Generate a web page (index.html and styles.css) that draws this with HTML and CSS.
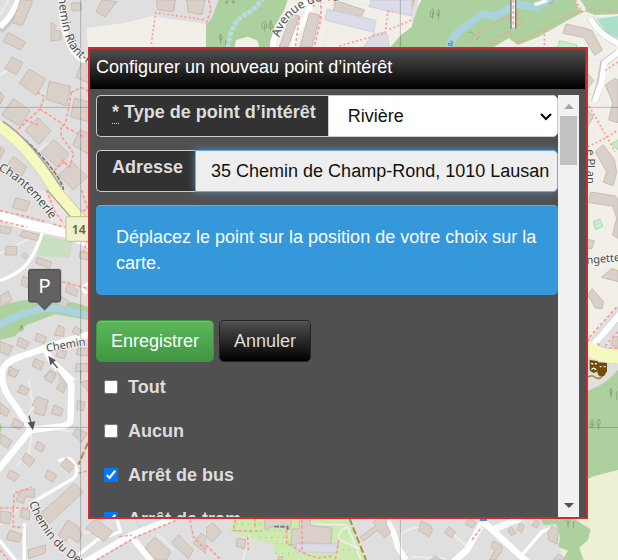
FILE: index.html
```html
<!DOCTYPE html>
<html lang="fr">
<head>
<meta charset="utf-8">
<meta name="viewport" content="width=device-width, initial-scale=1">
<title>Configurer un nouveau point d’intérêt</title>
<link rel="stylesheet" href="styles.css">
</head>
<body>
<svg class="map" viewBox="0 0 618 560" preserveAspectRatio="xMidYMid slice" aria-hidden="true">
  <rect class="residential" width="618" height="560"/>

  <!-- north-west -->
  <svg x="0" y="0" width="206" height="190" viewBox="0 0 618 570">
    <path class="land" d="M260 84 370 70 455 49 618 72V160H265Z"/>
    <path class="lane" d="M0 45 25 0M0 225 30 205M100 465 140 430"/>
    <path class="casing" d="M0 92Q45 50 62 0"/>
    <path class="road r18" d="M0 82Q38 45 55 0"/>
    <path class="road r18" d="M184 0Q183 70 205 125T275 190"/>
    <path class="building" d="M62 0 36 68 67 77 97 8 95 0ZM25 97 9 124 62 150 77 126ZM35 171 68 188 49 224 15 206ZM87 207 136 237 110 286 57 250ZM148 244 212 259 199 317 138 298ZM40 296 90 332 61 380 5 345ZM115 353 153 392 117 433 75 391ZM162 418 207 462 172 502 125 458ZM217 487 262 530 220 570 175 525ZM41 470 80 500 64 530 22 495ZM0 275 12 290 0 313ZM0 440 14 450 0 478ZM214 10 242 8 245 30 216 33ZM154 68 169 77 162 90 182 94 184 119 153 123 153 87ZM306 0 350 5 315 51 288 35ZM470 0H526L521 35 472 29ZM560 0H615L606 44 565 36ZM244 190 280 190V255L228 232ZM224 294 280 310V370L212 350ZM240 390 280 405V470L218 435Z"/>
    <path class="path" d="M111 276 133 290 120 327 42 400M120 327 183 369 191 378 250 410M214 277 197 370 183 382 184 409 222 462 208 501 186 479M150 522 200 480M213 277 245 263 270 276M75 360 115 375M40 402 72 430"/>
    <path class="path dots" d="M454 132 467 38 618 60"/>
    <path class="rail" d="M0 370Q70 405 130 475T190 570"/>
    <path class="major-casing" d="M0 378Q75 425 170 570"/>
    <path class="major" d="M-10 375Q75 425 170 575"/>
    <path class="grid" d="M242 0V570M0 322H618"/>
    <path id="riant" class="guide" d="M174 -32Q178 58 198 116T290 204"/>
    <text class="street large"><textPath href="#riant">Chemin Riant-Pré</textPath></text>
  </svg>

  <!-- west -->
  <svg x="0" y="190" width="206" height="190" viewBox="0 0 618 570">
    <path class="pink" d="M95 0H200L240 85 180 115 140 65Z"/>
    <path class="forest" d="M0 345 75 330 110 335 220 337 265 350V390L165 373 80 405 42 440 0 450Z"/>
    <path class="orchard" d="M128 136 219 156 209 204 112 197Z"/>
    <path class="river" d="M-10 410Q50 375 100 363Q155 340 270 380"/>
    <path class="lane" d="M80 0 140 40 157 95M0 190 90 145M0 540 120 475M78 230 120 290"/>
    <path class="road r27" d="M-10 72 65 100 198 128 280 165"/>
    <path class="road r12" d="M126 130Q100 205 73 230T0 272M270 280Q235 290 260 310"/>
    <path class="road r24" d="M8 580Q-8 520 60 500L135 475 190 455 280 430M135 475 155 515 220 575"/>
    <path class="building" d="M48 23 90 36 78 63 37 53ZM0 107 35 114 28 132 0 128ZM68 121 118 134 111 152 60 139ZM17 169H50V195H15ZM74 187 85 198 75 208 64 196ZM112 201 155 217 148 235 106 218ZM69 258 90 268 82 293 64 284ZM25 303 36 331 0 350V318ZM205 275 222 293 235 301 228 320 195 304ZM175 315 206 333 195 355 170 340ZM0 454 39 469 25 498 0 486ZM57 442 89 457 76 477 50 466ZM111 429 140 442 132 461 104 451ZM176 405 193 413 191 439 163 436ZM226 409 247 422 236 437 216 427ZM104 506 132 516 123 541 96 528ZM29 529 56 543 46 562 23 554ZM151 540 169 549 158 570 133 559ZM232 475H265V498L229 494ZM229 521H265V545H225ZM173 480 200 484 194 506 168 499ZM240 185 265 188V210L237 203Z"/>
    <path class="path" d="M0 62 80 80 140 96M160 102 195 113M139 0 165 65 190 100M245 0 262 55 210 90M0 92 80 112M187 275 264 296M262 150 250 190"/>
    <path class="major-casing" d="M155 -10 250 100"/>
    <path class="major" d="M155 -12 252 100"/>
    <path class="grid" d="M242 0V570"/>
    <rect class="shield" x="198" y="80" width="90" height="74" rx="5"/>
    <text class="ref" x="215" y="132">14</text>
    <text class="street" transform="translate(140 486) rotate(-10)">Chemin</text>
    <path class="arrow" d="M173 534 152 510M148 502l4 20 12-11Z"/>
    <path class="symbol" d="M58 422 64 405 72 420M65 407V426"/>
    <path class="pin-shadow" d="M89 236H178Q184 236 184 242V330Q184 338 177 338H158L134 363 109 338H91Q84 338 84 330V242Q84 236 89 236Z"/>
    <path class="pin" d="M92 239H175Q181 239 181 245V328Q181 335 175 335H155L134 358 112 335H92Q86 335 86 328V245Q86 239 92 239Z"/>
    <text class="pin-text" x="115" y="310">P</text>
  </svg>
  <svg x="0" y="150" width="90" height="90" viewBox="0 0 270 270">
    <path id="chantemerle" class="guide" d="M-6 60Q75 100 150 206"/>
    <text class="street large"><textPath href="#chantemerle">Chantemerle</textPath></text>
  </svg>

  <!-- south-west -->
  <svg x="0" y="370" width="206" height="190" viewBox="0 0 618 570">
    <path class="forest" d="M0 158 5 165V182L0 185Z"/>
    <path class="industry" d="M405 445H490L420 475Z"/>
    <path class="lane" d="M60 175 100 110 85 30M95 192 85 255 50 285M180 180 260 190M110 390 140 365M0 465 35 430 65 410M250 490 300 480 310 510M470 490 520 540"/>
    <path class="road r24" d="M8 -10Q0 45 30 85T92 180L-10 305M92 180 180 170Q213 165 212 145L214 45Q210 25 165 -10"/>
    <path class="road r12" d="M175 273Q210 255 222 280 240 305 220 325L102 395 80 435M73 460V575M-10 500 50 575M350 445 362 485 290 510 235 555"/>
    <path class="road r24" d="M250 580 390 497 530 440M395 500 460 580"/>
    <path class="building" d="M34 0H58L45 22 25 13ZM148 3 168 15 155 40 134 27ZM63 44 90 58 77 75 52 66ZM112 80 145 92 133 137 103 130 108 113 96 105ZM163 105 190 118 181 139 153 130ZM0 98 29 121 20 140 0 130ZM43 145 72 160 60 179 34 168ZM0 190 36 212 23 235 0 220ZM113 213 135 228 125 247 104 234ZM77 248 105 269 90 291 65 270ZM198 263 224 287 208 308 183 287ZM31 299 58 316 43 335 20 320ZM143 299 170 315 158 337 135 322ZM223 340 250 366 149 460 122 430ZM60 362 105 357 102 383 76 380 70 400 48 392ZM65 415 90 420 87 450 61 441ZM0 423 35 428 28 462 0 457ZM29 481 66 493 58 517 18 508ZM203 450 235 470 245 495 235 520 205 498 198 515 175 495ZM84 540 137 524 136 548 87 566ZM240 35 265 32V65ZM232 92 255 96 250 123 230 118ZM230 175 262 190 245 217 217 192ZM275 455 290 449 338 485 313 515 258 475ZM464 502 512 545 500 570H465L435 533ZM536 495 580 540 565 566 515 518ZM603 490 618 500V550L580 520ZM170 0 200 45 190 68 168 55 180 40"/>
    <path class="path" d="M0 414H85M40 415 43 370 95 351M40 418 40 470 70 473M235 310 264 302M570 450 580 500 618 540M0 540 25 570"/>
    <path class="path" d="M290 570 410 500 535 448M358 500 395 495"/>
    <path class="track" d="M264 218 235 284"/>
    <path class="grid" d="M242 0V570M0 172H618"/>
    <path class="arrow" d="M87 137 96 168M86 159 98 176 103 156Z"/>
    <path id="devin" class="guide" d="M87 398Q105 455 151 510T260 595"/>
    <text class="street large"><textPath href="#devin">Chemin du Dev</textPath></text>
  </svg>

  <!-- north -->
  <svg x="206" y="0" width="206" height="141" viewBox="0 0 618 423">
    <path class="land" d="M0 0H618V423H0Z"/>
    <path class="forest" d="M37 0H245L235 30 205 80 195 145H160L155 122 125 110 90 120 85 145H0V75Q25 40 37 0ZM618 80 585 105 550 145H618Z"/>
    <path class="residential" d="M0 0H36L20 50 0 75Z"/>
    <path class="water-line" d="M170 -10Q155 25 115 45T65 145"/>
    <path class="road r18" d="M315 0Q270 20 235 60T200 145M320 5 300 55 268 100 265 145"/>
    <path class="lane" d="M255 70 230 145M315 0 328 40M380 0 520 20 618 38M380 30 350 140M400 145 505 110"/>
    <path class="building" d="M390 2 475 30 463 57 382 31ZM310 38 342 46 318 141H282ZM255 43 280 48 265 90 245 141H220Z"/>
    <path class="industry" d="M363 27 511 61 503 97 357 60ZM495 0H618V48L489 20ZM500 103 530 97 545 106 550 145H470Z"/>
    <path class="path" d="M8 0 15 30 0 70M315 0 325 20M345 0 345 55 325 141M280 50 268 141M390 0 380 15"/>
    <path class="path dots" d="M400 138 480 115 538 100 545 35 560 35M550 88 618 60"/>
    <path class="grid" d="M583 0V141"/>
    <path class="symbol" d="M62 0V12M82 0V12M56 4Q62 16 68 2M77 3Q82 12 88 2M176 64Q164 70 168 82 173 90 181 82 185 72 176 64ZM176 72V94M194 60 187 84H201ZM194 70V94M44 101Q35 111 44 121 53 113 44 101ZM44 110V131M59 120V136"/>
    <path id="avenue" class="guide" d="M220 113Q236 55 290 24T400 4"/>
    <text class="street large"><textPath href="#avenue">Avenue de Val</textPath></text>
  </svg>

  <!-- north-east -->
  <svg x="412" y="0" width="206" height="190" viewBox="0 0 618 570">
    <path class="land" d="M0 0H618V570H0Z"/>
    <path class="forest" d="M28 0H490L500 28 550 45 618 42V0H505L525 30 465 62 380 110 318 135 290 115 230 150H-10V80Z"/>
    <path class="residential" d="M0 0H20L12 40 0 75Z"/>
    <path class="river" d="M110 150Q115 110 160 80L210 42 245 50 290 25 320 12 370 22 430 -10"/>
    <path class="pitch" d="M553 56 618 48V115L585 100Z"/>
    <path class="green-box" d="M442 122 495 135 490 150H435ZM600 430 618 420V450Z"/>
    <path class="lane" d="M520 175 618 195M525 400 555 385M550 400 525 410M560 180 618 150"/>
    <path class="road-casing" d="M535 55Q560 100 618 130M618 157 575 190 565 250 548 305"/>
    <path class="road r18" d="M535 55Q560 105 625 133M625 152 578 188 568 250 548 305"/>
    <path class="building" d="M462 72 525 86 540 92 571 150 548 166 515 112 453 100ZM527 220 545 242 527 265ZM608 235 618 240V368L590 360 602 308 580 255ZM527 330 545 350 527 378ZM573 434 607 478 614 517 603 557 574 547 584 515 550 455ZM0 0H8L0 25Z"/>
    <path class="path dots" d="M490 0 510 35 480 40 318 130 292 95 255 110 225 140M165 138Q190 95 265 60L315 40 327 65 310 80M397 90V141M520 28 618 35M531 318 610 455M527 440 570 420 618 390M580 212 618 185"/>
    <path class="bridge" d="M304 -5V86"/><path class="road r12" d="M304 -5V86"/><path class="path" d="M304 0V86"/>
    <path class="road r12" d="M368 14 410 0"/>
    <path class="grid" d="M527 322H618"/>
    <path class="symbol" d="M62 26Q50 38 57 52 70 50 62 26ZM62 35V58M80 28Q70 37 76 48 88 44 80 28ZM80 38V60M170 98Q180 90 186 108M192 120 206 105M405 0 415 12 425 0"/>
    <text class="water-text" transform="translate(105 135) rotate(20)">a</text>
    <text class="street" transform="translate(524 448) rotate(90)">e Pl an</text>
  </svg>

  <!-- east -->
  <svg x="412" y="190" width="206" height="190" viewBox="0 0 618 570">
    <path class="land" d="M500 0H618V350L530 450H500Z"/>
    <path class="forest" d="M618 540 590 570H618Z"/>
    <path class="lane" d="M527 275 618 205M527 20 560 0M575 470 618 430"/>
    <path class="building" d="M536 6 610 18 618 30V145L602 135 614 85 602 48 530 38ZM527 148 547 153 540 176 527 175ZM600 235 618 242V275L568 262ZM540 296 575 335 570 356 550 354 527 315ZM605 438 618 440V475L598 465Z"/>
    <path class="green-box" d="M544 96 563 87 572 108 552 119Z"/>
    <path class="road-casing r30" d="M535 475 630 365"/>
    <path class="road r24" d="M535 475 630 365"/>
    <path class="path" d="M532 442 618 347M555 460 573 475 618 425M527 445 545 475 618 475M570 514 618 520"/>
    <path class="major wide" d="M520 465Q550 500 630 500"/>
    <path class="masks" d="M533 509 558 514V540Q546 558 533 540ZM558 517 585 519V545Q570 562 557 546Z"/>
    <path class="mask-face" d="M537 520 544 522M549 522 555 520M538 539Q546 530 552 540M563 530H569M575 530H581M564 549Q570 540 579 549"/>
    <path class="track thin" d="M527 562Q540 553 550 562T570 562"/>
    <text class="street" transform="translate(524 222) rotate(-5)">ngette</text>
  </svg>

  <!-- south-east -->
  <svg x="412" y="370" width="206" height="190" viewBox="0 0 618 570">
    <path class="forest" d="M527 62Q580 45 618 0V302L545 320 527 328Z"/>
    <path class="farm" d="M527 328 545 319 618 300V570H450L440 447H527Z"/>
    <path class="forest" d="M385 447H487L536 478 528 510 502 533 515 570H450L468 542 438 530 445 505 433 462 395 465Z"/>
    <path class="lane" d="M0 475 35 470M120 490 165 530M285 535 300 520M0 560 100 565"/>
    <path class="road r24" d="M125 575 165 540 213 455 350 580M240 480 325 445"/>
    <path class="road r12" d="M330 555 390 485 427 472"/>
    <path class="building" d="M28 452 58 469 61 482 52 500 20 482ZM112 470 131 486 119 503 98 489ZM172 446 193 458 181 474 160 462ZM245 513 271 528 268 545 250 570H233L249 540 236 530ZM298 470 312 490 298 497 287 480ZM325 460 337 468 328 488 316 478ZM370 449 383 457 375 474 360 467ZM420 468 438 480 435 522 410 510 407 485ZM440 552 458 565V570H424ZM70 558 88 570H55Z"/>
    <path class="path" d="M180 510 210 470"/>
    <path class="blue" d="M203 450H225"/>
    <path class="grid" d="M527 172H618"/>
    <path class="symbol" d="M597 54Q589 65 597 75 606 66 597 54ZM597 60V84M614 63V90M540 148 534 165H546ZM540 158V176M560 147Q550 160 560 168 570 160 560 147ZM560 158V179M460 448 468 460 475 448M468 455V473M485 453V475"/>
    <path class="masks" d="M556 0H583Q582 20 568 20 555 18 556 0Z"/><path class="track thin" d="M527 21Q540 14 548 21T566 21"/>
  </svg>

  <!-- south -->
  <svg x="206" y="518" width="206" height="42" viewBox="0 354 618 126">
    <path class="park" d="M85 354H430L480 480H225L205 460V435L70 395Z"/>
    <path class="park-dots" d="M90 372H175M95 392H240M160 412H240M210 432H250M210 460H265M400 372H430M400 395H440M410 450H470M325 380H390"/>
    <path class="lane" d="M110 480 130 405M300 354 318 373 425 374M425 380Q390 395 400 420L460 445M425 380 465 480M585 400 618 385M585 400V480"/>
    <path class="road r18" d="M530 350Q560 375 575 440L600 480"/>
    <path class="building" d="M20 368 47 397 17 426 0 410V385ZM94 414 120 420 116 446 90 438ZM176 354H257L252 388 207 378 177 390ZM258 387H280V354H313V375L378 385 375 432 280 428 275 440 255 432ZM463 410 510 377 502 366 515 354H545L540 370 554 398 536 413 515 390 472 423ZM218 470H230V480H215Z"/>
    <path class="industry" d="M272 431 398 432 392 458 270 456Z"/>
    <path class="path" d="M88 360 82 392 165 394M147 354V380M125 410 127 450M242 390V430L305 465 335 474 380 468M288 360V455M0 435 45 480M398 420 388 480"/>
    <path class="rail" d="M205 380H245V390"/>
    <path class="track" d="M430 354 480 480"/>
    <path class="grid" d="M583 354V480"/>
  </svg>
</svg>

<main class="stage">
  <section class="dialog" role="dialog" aria-labelledby="dialog-title">
    <h1 class="dialog-title" id="dialog-title">Configurer un nouveau point d’intérêt</h1>
    <div class="dialog-body">
      <form class="form">
        <div class="field">
          <label class="addon" for="type"><abbr class="required" title="Obligatoire">*</abbr> Type de point d’intérêt</label>
          <div class="select-wrap">
            <select class="control select" id="type"><option>Rivière</option></select>
            <svg class="chevron" viewBox="0 0 12 8" aria-hidden="true"><path d="M1 1l5 5 5-5"/></svg>
          </div>
        </div>
        <div class="field">
          <label class="addon" for="address">Adresse</label>
          <input class="control address" id="address" type="text" value="35 Chemin de Champ-Rond, 1010 Lausan">
        </div>
        <p class="notice">Déplacez le point sur la position de votre choix sur la carte.</p>
        <div class="actions">
          <button class="button save" type="button">Enregistrer</button>
          <button class="button cancel" type="button">Annuler</button>
        </div>
        <div class="options">
          <label class="option"><input type="checkbox">Tout</label>
          <label class="option"><input type="checkbox">Aucun</label>
          <label class="option"><input type="checkbox" checked>Arrêt de bus</label>
          <label class="option"><input type="checkbox" checked>Arrêt de tram</label>
        </div>
      </form>
      <div class="scrollbar" aria-hidden="true">
        <span class="scroll-up"></span>
        <span class="scroll-thumb"></span>
        <span class="scroll-down"></span>
      </div>
    </div>
  </section>
</main>
</body>
</html>
```
FILE: styles.css
```css
* { box-sizing: border-box; }

body {
  margin: 0;
  min-height: 100vh;
  overflow: hidden;
  color: #ddd;
  font: 18px/26px "Liberation Sans", Arial, sans-serif;
}

/* Map */
.map { position: fixed; inset: 0; width: 100%; height: 100%; }
.residential { fill: #dfdfdf; }
.land { fill: #f2efe9; }
.pink { fill: #eee5e2; }
.forest { fill: #add19e; }
.orchard { fill: #c8dfc0; }
.park { fill: #cdebb0; }
.park-dots { fill: none; stroke: #8fbd78; stroke-width: 3; stroke-dasharray: 3 15; }
.farm { fill: #eef0d5; }
.pitch { fill: #aae0cb; }
.green-box { fill: #cfeccf; stroke: #9be0a6; stroke-width: 3; }
.industry { fill: #dcdce8; stroke: #c5c5d4; stroke-width: 2; }
.building { fill: #d9d0c9; stroke: #c9bcb2; stroke-width: 3; }
.river { fill: none; stroke: #aad3df; stroke-width: 22; }
.water-line { fill: none; stroke: #b9dce3; stroke-width: 14; stroke-dasharray: 14 4; }
.lane { fill: none; stroke: #ececec; stroke-width: 6; }
.road { fill: none; stroke: #fff; stroke-linejoin: round; }
.r12 { stroke-width: 10; }
.r18 { stroke-width: 17; }
.r24 { stroke-width: 19; }
.r27 { stroke-width: 30; }
.casing, .road-casing { fill: none; stroke: #c9c9c9; stroke-width: 22; }
.major-casing { fill: none; stroke: #a4a88c; stroke-width: 37; }
.major { fill: none; stroke: #f6f9bf; stroke-width: 32; }
.wide { stroke-width: 42; }
.rail { fill: none; stroke: #777; stroke-width: 5; stroke-dasharray: 14 4; }
.bridge { fill: none; stroke: #777; stroke-width: 18; }
.path { fill: none; stroke: #fa9c94; stroke-width: 5; stroke-dasharray: 10 6; }
.dots { stroke-dasharray: 6 7; }
.track { fill: none; stroke: #b08c48; stroke-width: 6; stroke-dasharray: 22 8; }
.thin { stroke-width: 4; stroke-dasharray: none; }
.blue { stroke: #3498db; stroke-width: 6; }
.grid { fill: none; stroke: #000; stroke-opacity: .22; stroke-width: 3; }
.symbol { fill: none; stroke: #4f7a44; stroke-opacity: .4; stroke-width: 3; }
.arrow { fill: #555; stroke: #555; stroke-width: 4; }
.masks { fill: #734a08; }
.mask-face { fill: none; stroke: #f2efe9; stroke-width: 4; }
.guide { fill: none; }
.street { fill: #4c4c4c; stroke: #f5f5f5; stroke-width: 5; paint-order: stroke; font: 33px "Noto Sans", sans-serif; }
.large { font-size: 36px; }
.ref { fill: #64643c; font: 600 37px "Noto Sans", sans-serif; }
.water-text { fill: #4d80b3; font: 30px "Noto Sans", sans-serif; }
.shield { fill: #eff0cc; stroke: #c1c190; stroke-width: 3; }
.pin-shadow { fill: #333; fill-opacity: .4; }
.pin { fill: #626262; stroke: #484848; stroke-width: 3; }
.pin-text { fill: #fff; font: 62px "Noto Sans", sans-serif; }

/* Dialog */
.stage {
  position: relative;
  display: flex;
  height: 100vh;
  padding: 47px 30px 41px 88px;
}
.dialog {
  flex: 1;
  min-width: 0;
  display: flex;
  flex-direction: column;
  overflow: hidden;
  border: 2px solid #cb2c2c;
  background: #505050;
}
.dialog-title {
  flex: none;
  margin: 0 1px 0 0;
  padding: 5px 6px 9px;
  background: linear-gradient(#505050, #000);
  color: #fff;
  font-size: 18px;
  font-weight: 400;
  line-height: 26px;
}
.dialog-body {
  flex: 1;
  min-height: 0;
  display: flex;
  padding: 6px 7px 0 6px;
}
.form { flex: 1; min-width: 0; }
.field { display: flex; height: 42px; margin-bottom: 13px; }
.addon {
  flex: none;
  padding: 3px 12px 3px 15px;
  border: 1px solid #ccc;
  border-right: 0;
  border-radius: 5px 0 0 5px;
  background: #323232;
  font-weight: 700;
}
.required { text-decoration: underline dotted 1px; text-underline-offset: 5px; }
.select-wrap { position: relative; flex: 1; min-width: 0; }
.control {
  width: 100%;
  height: 100%;
  margin: 0;
  border: 1px solid #ccc;
  border-radius: 0 5px 5px 0;
  background: #fff;
  color: #111;
  font: inherit;
}
.select { appearance: none; padding: 0 19px; }
.chevron {
  position: absolute;
  top: 18px;
  right: 6px;
  width: 12px;
  height: 8px;
  fill: none;
  stroke: #000;
  stroke-width: 2;
  pointer-events: none;
}
.address {
  flex: 1;
  min-width: 0;
  padding: 0 2px 0 15px;
  border-color: #66afe9;
  background: #eee;
  box-shadow: 0 0 8px rgba(102, 175, 233, .6);
}
.notice {
  margin: 0 0 25px;
  padding: 19px 20px;
  border-radius: 5px;
  background: #3498db;
  box-shadow: inset 0 1px #5dade2;
  color: #fff;
}
.actions { display: flex; align-items: flex-start; gap: 5px; }
.button {
  height: 42px;
  padding: 0 14px;
  border: 1px solid #419641;
  border-radius: 5px;
  font: inherit;
}
.save { background: linear-gradient(#5cb85c, #419641); box-shadow: inset 0 1px #75c475; color: #fff; }
.cancel { border-color: #222; background: linear-gradient(#505050, #000); box-shadow: inset 0 1px #626262; color: #ddd; }
.options { display: grid; gap: 18px; padding-top: 12px; }
.option { display: flex; align-items: center; gap: 10px; padding-left: 8px; font-weight: 700; }
.option input { width: 14px; height: 14px; margin: 0; }

.scrollbar {
  flex: none;
  display: flex;
  flex-direction: column;
  align-items: center;
  width: 21px;
  padding: 9px 0;
  background: #f1f1f1;
}
.scroll-up, .scroll-down { border: 5px solid transparent; }
.scroll-up { border-top: 0; border-bottom-color: #a3a3a3; }
.scroll-down { margin-top: auto; border-bottom: 0; border-top-color: #505050; }
.scroll-thumb { width: 17px; height: 49px; margin-top: 7px; background: #c1c1c1; }
```
